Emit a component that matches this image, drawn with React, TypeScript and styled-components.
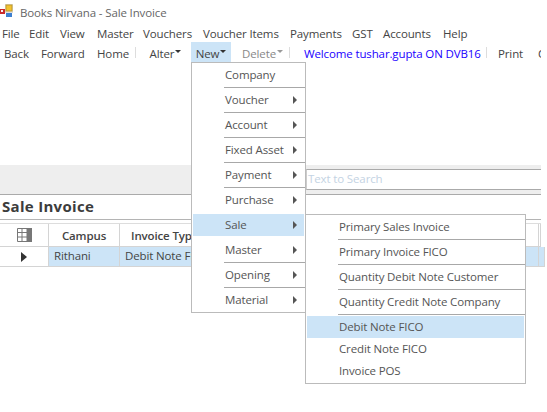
import React from 'react';
import styled, { createGlobalStyle } from 'styled-components';

const Global = createGlobalStyle`
  html, body { margin: 0; padding: 0; background: #fff; }
  body { font-family: "Open Sans", "Noto Sans", sans-serif; font-size: 11.5px; letter-spacing: -0.13px; color: #444; overflow: hidden; }
`;
const Page = styled.div`
  position: relative; width: 547px; height: 412px; overflow: hidden; background: #fff;
`;
const Main = styled.div`width: 541px; display: flex; flex-direction: column;`;
const TitleBar = styled.div`
  height: 24px; display: flex; align-items: center; gap: 6px; color: #666;
`;
const MenuBar = styled.div`height: 18px; display: flex; align-items: center; padding-left: 2px; color: #444;`;
const MenuItem = styled.span<{ $w: number }>`width: ${p => p.$w}px; flex: none; white-space: nowrap;`;
const ToolBar = styled.div`height: 20px; display: flex; align-items: flex-start; padding-left: 4px; color: #444; white-space: nowrap; overflow: hidden;`;
const Tool = styled.span<{ $w: number }>`
  width: ${p => p.$w}px; flex: none; line-height: 23px; color: #444;
`;
const ToolSep = styled.i<{ $after: number }>`
  flex: none; align-self: center; width: 1px; height: 11px; background: #ddd; margin-right: ${p => p.$after}px;
`;
const DropTool = styled.span<{ $active?: boolean; $muted?: boolean; $w: number; $left?: number }>`
  flex: none; width: ${p => p.$w}px; height: 20px; box-sizing: border-box; display: flex; align-items: center; justify-content: center; gap: 1px;
  padding-top: 3px; padding-left: ${p => p.$left ?? 0}px;
  background: ${p => p.$active ? '#cce4f7' : 'transparent'};
  color: ${p => p.$muted ? '#888' : '#444'};
`;
const Caret = styled.i<{ $muted?: boolean }>`
  width: 0; height: 0; border-left: 3px solid transparent; border-right: 3px solid transparent;
  border-top: 3px solid ${p => p.$muted ? '#999' : '#333'}; margin-bottom: 4px;
`;
const Welcome = styled.span`flex: none; width: 182px; line-height: 23px; color: #1a00ff;`;
const Blank = styled.div`height: 103px;`;
const SearchBand = styled.div`
  height: 30px; box-sizing: border-box; background: #eee; border-bottom: 1px solid #aaa;
  display: flex; justify-content: flex-end; padding-top: 4px;
`;
const SearchBox = styled.div`
  width: 235px; height: 21px; box-sizing: border-box; background: #fff; border-top: 1px solid #aaa; border-bottom: 1px solid #aaa;
  border-left: 1px solid #ccc; color: #c4d3e3; padding-left: 1px; line-height: 18px;
`;
const Heading = styled.div`
  height: 25px; box-sizing: border-box; border-bottom: 1px solid #b4b4b4; font-weight: 700; font-size: 15px; letter-spacing: 0.3px; color: #3c3c3c;
  padding-left: 2px; line-height: 23px;
`;
const Grid = styled.div`
  margin-top: 3px; border-top: 1px solid #ddd;
  display: grid; grid-template-columns: 49px 71px 419px 2px;
`;
const HeadCell = styled.div<{ $left?: boolean }>`
  height: 22px; border-right: 1px solid #d4d4d4; border-bottom: 1px solid #d4d4d4; font-weight: 600; color: #444;
  display: flex; align-items: center; justify-content: ${p => p.$left ? 'flex-start' : 'center'};
  padding-left: ${p => p.$left ? '11px' : '0'}; overflow: hidden; white-space: nowrap;
`;
const RowHead = styled.div`
  height: 19px; border-right: 1px solid #d4d4d4; border-bottom: 1px solid #d4d4d4;
  display: flex; align-items: center; justify-content: center;
`;
const Cell = styled.div`
  height: 19px; background: #cce4f7; border-right: 1px solid #d4d4d4; border-bottom: 1px solid #d4d4d4;
  padding-left: 5px; line-height: 18px; overflow: hidden; white-space: nowrap;
`;
const Flyout = styled.div<{ $x: number; $y: number; $w: number }>`
  position: absolute; left: ${p => p.$x}px; top: ${p => p.$y}px; width: ${p => p.$w}px;
  box-sizing: border-box; background: #fff; border: 1px solid #bbb; padding: 1px;
`;
const Row = styled.div<{ $active?: boolean }>`
  position: relative; height: 22px; box-sizing: border-box; padding-left: 32px;
  line-height: 21px; color: #555;
  background: ${p => p.$active ? '#cce4f7' : 'transparent'};
`;
const Rule = styled.div<{ $hidden?: boolean }>`
  height: 1px; margin: 1px -1px 1px 31px;
  background: ${p => p.$hidden ? 'transparent' : '#a8a8a8'};
`;
const Arrow = styled.i`
  position: absolute; right: 7px; top: 7px; width: 0; height: 0;
  border-top: 4px solid transparent; border-bottom: 4px solid transparent; border-left: 4px solid #555;
`;

const mainItems = ['Company','Voucher','Account','Fixed Asset','Payment','Purchase','Sale','Master','Opening','Material'];
const subItems = ['Primary Sales Invoice','Primary Invoice FICO','Quantity Debit Note Customer','Quantity Credit Note Company'];

export default function App() {
  return (
    <Page>
      <Global />
      <Main>
        <TitleBar>
          <svg width="14" height="16" viewBox="0 0 14 16">
            <rect x="5" y="0" width="8" height="9" fill="#ddd" />
            <rect x="6" y="1" width="6" height="6" fill="#f2c230" stroke="#c09a2a" />
            <rect x="0" y="5" width="5" height="5" fill="#c92a2a" />
            <rect x="6" y="9" width="6" height="4" fill="#3d7fd0" />
            <rect x="1" y="6" width="2" height="2" fill="#f4f4f4" />
          </svg>
          Books Nirvana - Sale Invoice
        </TitleBar>
        <MenuBar>
          <MenuItem $w={27}>File</MenuItem>
          <MenuItem $w={31}>Edit</MenuItem>
          <MenuItem $w={37}>View</MenuItem>
          <MenuItem $w={46}>Master</MenuItem>
          <MenuItem $w={60}>Vouchers</MenuItem>
          <MenuItem $w={87}>Voucher Items</MenuItem>
          <MenuItem $w={62}>Payments</MenuItem>
          <MenuItem $w={31}>GST</MenuItem>
          <MenuItem $w={60}>Accounts</MenuItem>
          <MenuItem $w={40}>Help</MenuItem>
        </MenuBar>
        <ToolBar>
          <Tool $w={37}>Back</Tool>
          <Tool $w={56}>Forward</Tool>
          <Tool $w={38}>Home</Tool>
          <ToolSep $after={0} />
          <DropTool $w={55} $left={4}>Alter<Caret /></DropTool>
          <DropTool $w={40} $active>New<Caret /></DropTool>
          <DropTool $w={58} $muted $left={5}>Delete<Caret $muted /></DropTool>
          <ToolSep $after={14} />
          <Welcome>Welcome tushar.gupta ON DVB16</Welcome>
          <ToolSep $after={11} />
          <Tool $w={40}>Print</Tool>
          <Tool $w={10}>C</Tool>
        </ToolBar>
        <Blank />
        <SearchBand><SearchBox>Text to Search</SearchBox></SearchBand>
        <Heading>Sale Invoice</Heading>
        <Grid>
          <HeadCell>
            <svg width="15" height="14" viewBox="0 0 15 14">
              <path d="M0.5 0.5H14.5V13.5H0.5ZM0.5 4.5H10M0.5 9H10M5 0.5V13.5M10 0.5V13.5" fill="none" stroke="#777" />
              <rect x="10" y="0" width="5" height="14" fill="#777" />
            </svg>
          </HeadCell>
          <HeadCell>Campus</HeadCell>
          <HeadCell $left>Invoice Type</HeadCell>
          <HeadCell />
          <RowHead>
            <svg width="6" height="10" viewBox="0 0 6 10"><path d="M0 0L6 5L0 10Z" fill="#333" /></svg>
          </RowHead>
          <Cell>Rithani</Cell>
          <Cell>Debit Note FICO</Cell>
          <Cell />
        </Grid>
      </Main>
      <Flyout $x={191} $y={62} $w={115}>
        {mainItems.map((m, i) => (
          <React.Fragment key={m}>
            <Row $active={m === 'Sale'}>
              {m}{i > 0 && <Arrow />}
            </Row>
            {i < mainItems.length - 1 && <Rule $hidden={m === 'Purchase' || m === 'Sale'} />}
          </React.Fragment>
        ))}
      </Flyout>
      <Flyout $x={305} $y={214} $w={221}>
        {subItems.map(m => (
          <React.Fragment key={m}>
            <Row>{m}</Row>
            <Rule />
          </React.Fragment>
        ))}
        <Row $active>Debit Note FICO</Row>
        <Row>Credit Note FICO</Row>
        <Row>Invoice POS</Row>
      </Flyout>
    </Page>
  );
}
